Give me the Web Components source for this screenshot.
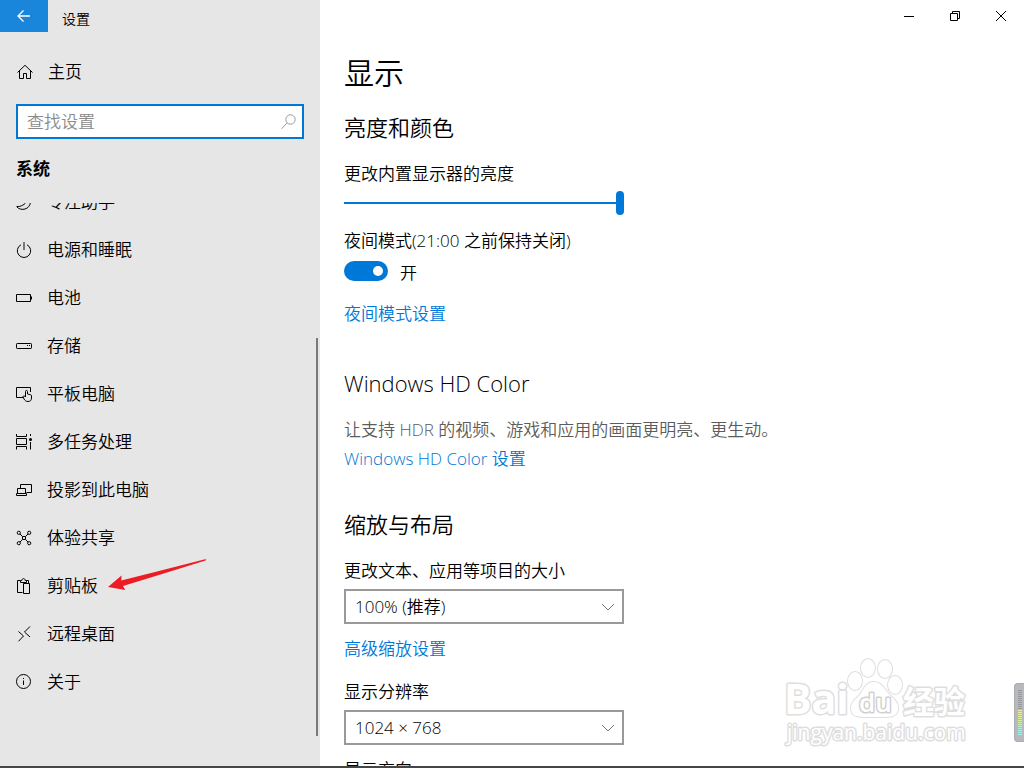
<!DOCTYPE html>
<html lang="zh-CN">
<head>
<meta charset="utf-8">
<title>设置</title>
<style>
    html, body{
        height: 100%;
        margin: 0;
    }
    body{
        overflow: hidden;
        background: #fff;
        color: #000;
        font: 350 17px/24px "Open Sans", "Noto Sans CJK SC", sans-serif;
    }
</style>
</head>
<body>

<settings-window>
    <settings-sidebar slot="sidebar">
        <nav-item icon="focus">专注助手</nav-item>
        <nav-item icon="power">电源和睡眠</nav-item>
        <nav-item icon="battery">电池</nav-item>
        <nav-item icon="storage">存储</nav-item>
        <nav-item icon="tablet">平板电脑</nav-item>
        <nav-item icon="multitask">多任务处理</nav-item>
        <nav-item icon="project">投影到此电脑</nav-item>
        <nav-item icon="share">体验共享</nav-item>
        <nav-item icon="clipboard">剪贴板<red-arrow slot="mark"></red-arrow></nav-item>
        <nav-item icon="remote">远程桌面</nav-item>
        <nav-item icon="info">关于</nav-item>
    </settings-sidebar>

    <settings-section heading="亮度和颜色">
        <brightness-slider label="更改内置显示器的亮度"></brightness-slider>
        <toggle-switch label="夜间模式(21:00 之前保持关闭)" state="开"></toggle-switch>
        <settings-link>夜间模式设置</settings-link>
    </settings-section>

    <settings-section heading="Windows HD Color">
        <settings-note>让支持 HDR 的视频、游戏和应用的画面更明亮、更生动。</settings-note>
        <settings-link near>Windows HD Color 设置</settings-link>
    </settings-section>

    <settings-section heading="缩放与布局">
        <drop-down label="更改文本、应用等项目的大小" value="100% (推荐)"></drop-down>
        <settings-link snug>高级缩放设置</settings-link>
        <drop-down label="显示分辨率" value="1024 × 768"></drop-down>
        <drop-down snug label="显示方向" value="横向"></drop-down>
    </settings-section>
</settings-window>

<script>
const icons = {
    back: `<path d="M14 8H2M7.500 2.500 2 8l5.500 5.500" stroke-width="1.300"/>`,
    home: `<path d="M1.500 9.500 9 2.300l7.500 7.200M3.500 8v7.500h4v-5h3v5h4V8" />`,
    search: `<circle cx="10.500" cy="5.500" r="4.700"/><path d="M7 9 1.500 14.800"/>`,
    focus: `<path d="M.500 12.500C5 13 9 10.500 11.500 6.500M1 13c4 4.500 13 2.500 13.500-5"/>`,
    power: `<path d="M5 2.800a6.700 6.700 0 1 0 6 0"/><path d="M8 0v8" stroke="#777" stroke-width="2"/>`,
    battery: `<path d="M.500 4.500h14v7H.500z"/><path d="M15.500 6.500v3"/>`,
    storage: `<rect x=".5" y="5.500" width="15" height="5" rx=".7"/><path d="M11 7.500h1M13 7.500h1"/>`,
    tablet: `<path d="M7 11.500H.500v-10h14V6"/><path d="M9.500 11V5.500c0-1.500 2-1.500 2 0V8l3 .700c.800.200 1 .600 1 1.300v2c0 2-1 3.500-3.500 3.500-2 0-3-.800-4-2.500L7 10.500c.500-1 1.500-.800 2.500.500"/>`,
    multitask: `<path d="M.500 0v2.500h10V0M.500 4.500h10v6H.500zM.500 15.500v-3h10v3M14.500 0v2M14.500 8v7.500"/><circle cx="14.500" cy="5.500" r="1.500" fill="currentColor" stroke="none"/>`,
    project: `<path d="M4.500 6V2.500h11v8h-5M1.500 11V6.500h8V11M.500 11.500h10v2H.500z"/>`,
    share: `<circle cx="2.800" cy="2.800" r="1.600"/><circle cx="13.200" cy="2.800" r="1.600"/><circle cx="2.800" cy="13.200" r="1.600"/><circle cx="13.200" cy="13.200" r="1.600"/><path d="m4 4 2.500 2.500M12 4 9.500 6.500M4 12l2.500-2.500M12 12 9.500 9.500M6.500 6.500h3v3h-3z"/>`,
    clipboard: `<path d="M6.500 14.500h-5v-12h3M10.500 2.500h2V5M4.500 4.500v-2h1.300c.200-2.600 3.200-2.600 3.400 0h1.300v2zM7.500 5.500h6v10h-6z"/>`,
    remote: `<path d="M2.500 5.500 7.500 10 2.500 15.300M14 .500 8.500 6 14 11"/>`,
    info: `<circle cx="7.500" cy="7.500" r="7"/><path d="M7.500 6.500V11M7.500 4v1"/>`,
    minimize: `<path d="M3 8.500h10"/>`,
    restore: `<path d="M3.500 5.500h7v7h-7zM5.500 5V3.500h7v7H11"/>`,
    close: `<path d="m3 3 10 10M13 3 3 13"/>`,
    chevron: `<path d="m2 5 6 6 6-6"/>`
};

const svg = (name, size = 16) => `<svg width="${size}" height="${size}" viewBox="0 0 ${size} ${size}" fill="none" stroke="currentColor" aria-hidden="true">${icons[name]}</svg>`;

class SettingsWindow extends HTMLElement{

    constructor(){
        super();
        this.attachShadow({mode : "open"}).innerHTML = `
            <style>
                :host{
                    display: grid;
                    grid-template-columns: 320px minmax(0, 1fr);
                    grid-template-rows: minmax(0, 1fr);
                    box-sizing: border-box;
                    height: 100vh;
                    border-bottom: 2px solid #474546;
                    position: relative;
                }
                .content{
                    display: flex;
                    flex-direction: column;
                    min-height: 0;
                    overflow: hidden;
                }
                main{
                    padding: 21px 24px 0;
                    display: flex;
                    flex-direction: column;
                    flex: none;
                }
                h1{
                    margin: 0 0 18px;
                    font-size: 30px;
                    line-height: 40px;
                    font-weight: inherit;
                }
                .sections{
                    display: flex;
                    flex-direction: column;
                    gap: 37px;
                }
            </style>
            <slot name="sidebar"></slot>
            <div class="content">
                <window-controls></window-controls>
                <main>
                    <h1>显示</h1>
                    <div class="sections"><slot></slot></div>
                </main>
            </div>
            <page-watermark></page-watermark>
            <level-meter></level-meter>
        `;
    }

}

class WindowControls extends HTMLElement{

    constructor(){
        super();
        this.attachShadow({mode : "open"}).innerHTML = `
            <style>
                :host{
                    display: flex;
                    justify-content: flex-end;
                    flex: none;
                }
                button{
                    display: grid;
                    place-items: center;
                    width: 46px;
                    height: 32px;
                    padding: 0;
                    border: 0;
                    background: none;
                    color: #000;
                }
            </style>
            <button aria-label="最小化">${svg("minimize")}</button>
            <button aria-label="还原">${svg("restore")}</button>
            <button aria-label="关闭">${svg("close")}</button>
        `;
    }

}

class SettingsSidebar extends HTMLElement{

    constructor(){
        super();
        this.attachShadow({mode : "open"}).innerHTML = `
            <style>
                :host{
                    display: flex;
                    flex-direction: column;
                    min-height: 0;
                    background: #e6e6e6;
                }
                header{
                    display: flex;
                    gap: 14px;
                    font-size: 14px;
                    line-height: 37px;
                    height: 32px;
                }
                button{
                    display: grid;
                    place-items: center;
                    padding: 0;
                    border: 0;
                    background: none;
                }
                .back{
                    width: 48px;
                    height: 32px;
                    background: #1a86db;
                    color: #fff;
                }
                .home{
                    display: flex;
                    align-items: center;
                    gap: 14px;
                    height: 48px;
                    margin-top: 16px;
                    padding-left: 16px;
                    color: inherit;
                    text-decoration: none;
                }
                .search{
                    display: flex;
                    align-items: center;
                    box-sizing: border-box;
                    height: 35px;
                    margin: 8px 16px 0;
                    padding: 0 6px 0 9px;
                    border: 2px solid #0078d7;
                    background: #fff;
                }
                input{
                    flex: 1;
                    min-width: 0;
                    padding: 0;
                    border: 0;
                    outline: 0;
                    background: none;
                    font: inherit;
                }
                input::placeholder{
                    color: #8a8a8a;
                }
                .search button{
                    color: #999;
                }
                h2{
                    margin: 18px 16px 22px;
                    font-size: 17px;
                    line-height: 24px;
                    font-weight: 700;
                }
                nav{
                    position: relative;
                    flex: 1;
                    min-height: 0;
                    overflow: hidden;
                }
                /* list is scrolled, its first row is partly hidden */
                .list{
                    margin-top: -25px;
                }
                .thumb{
                    position: absolute;
                    top: 135px;
                    right: 2px;
                    bottom: 30px;
                    width: 2px;
                    background: #7a7a7a;
                }
            </style>
            <header>
                <button class="back" aria-label="返回">${svg("back")}</button>
                <span>设置</span>
            </header>
            <a class="home" href="#home">${svg("home", 18)}<span>主页</span></a>
            <div class="search">
                <input type="text" placeholder="查找设置" aria-label="查找设置">
                <button aria-label="搜索">${svg("search")}</button>
            </div>
            <h2>系统</h2>
            <nav>
                <div class="list"><slot></slot></div>
                <div class="thumb"></div>
            </nav>
        `;
    }

}

class NavItem extends HTMLElement{

    constructor(){
        super();
        this.attachShadow({mode : "open"});
    }

    connectedCallback(){
        const icon = this.getAttribute("icon");
        this.shadowRoot.innerHTML = `
            <style>
                :host{
                    display: block;
                    position: relative;
                }
                a{
                    display: flex;
                    align-items: center;
                    gap: 15px;
                    height: 48px;
                    padding-left: 16px;
                    color: inherit;
                    text-decoration: none;
                }
            </style>
            <a href="#${icon}">${svg(icon)}<span><slot></slot></span></a>
            <slot name="mark"></slot>
        `;
    }

}

class RedArrow extends HTMLElement{

    constructor(){
        super();
        this.attachShadow({mode : "open"}).innerHTML = `
            <style>
                :host{
                    position: absolute;
                    left: 108px;
                    top: -4px;
                }
                svg{
                    display: block;
                }
            </style>
            <svg width="100" height="34" viewBox="0 0 100 34" aria-hidden="true">
                <path fill="#ed1c24" d="M0 29 13.500 17.500 13.300 22.500Q55 12 97 1.200q2 0 .500 1.300Q56 15.500 15 28l2.300 4z"/>
            </svg>
        `;
    }

}

class SettingsSection extends HTMLElement{

    constructor(){
        super();
        this.attachShadow({mode : "open"});
    }

    connectedCallback(){
        this.shadowRoot.innerHTML = `
            <style>
                :host{
                    display: block;
                }
                h2{
                    margin: 0 0 19px;
                    font-size: 22px;
                    line-height: 32px;
                    font-weight: inherit;
                }
            </style>
            <h2>${this.getAttribute("heading")}</h2>
            <slot></slot>
        `;
    }

}

class SettingsNote extends HTMLElement{

    constructor(){
        super();
        this.attachShadow({mode : "open"}).innerHTML = `
            <style>
                :host{
                    display: block;
                    color: #5c5c5c;
                }
            </style>
            <slot></slot>
        `;
    }

}

class SettingsLink extends HTMLElement{

    constructor(){
        super();
        this.attachShadow({mode : "open"}).innerHTML = `
            <style>
                :host{
                    display: block;
                    margin: 19px 0;
                }
                :host([snug]){
                    margin-top: 13px;
                }
                :host(:last-child){
                    margin-bottom: 4px;
                }
                :host([near]){
                    margin: 5px 0 0;
                }
                a{
                    color: #0078d7;
                    text-decoration: none;
                }
            </style>
            <a href="#more"><slot></slot></a>
        `;
    }

}

class BrightnessSlider extends HTMLElement{

    constructor(){
        super();
        this.attachShadow({mode : "open"});
    }

    connectedCallback(){
        this.shadowRoot.innerHTML = `
            <style>
                :host{
                    display: block;
                    margin-bottom: 14px;
                }
                label{
                    display: block;
                    margin-bottom: 5px;
                }
                input{
                    display: block;
                    appearance: none;
                    width: 100%;
                    max-width: 280px;
                    height: 24px;
                    margin: 0;
                    background: linear-gradient(#0078d7, #0078d7) center / 100% 2px no-repeat;
                }
                input::-webkit-slider-thumb{
                    appearance: none;
                    width: 8px;
                    height: 24px;
                    border-radius: 4px;
                    background: #0078d7;
                }
            </style>
            <label for="range">${this.getAttribute("label")}</label>
            <input id="range" type="range" min="0" max="100" value="100">
        `;
    }

}

class ToggleSwitch extends HTMLElement{

    constructor(){
        super();
        this.attachShadow({mode : "open"});
    }

    connectedCallback(){
        this.shadowRoot.innerHTML = `
            <style>
                :host{
                    display: block;
                }
                label{
                    display: block;
                    margin-bottom: 6px;
                }
                .row{
                    display: flex;
                    align-items: center;
                    gap: 12px;
                    height: 24px;
                }
                input{
                    appearance: none;
                    display: flex;
                    align-items: center;
                    box-sizing: border-box;
                    width: 44px;
                    height: 20px;
                    margin: 0;
                    padding: 0 5px;
                    border-radius: 10px;
                    background: #999;
                }
                input::before{
                    content: "";
                    width: 10px;
                    height: 10px;
                    border-radius: 50%;
                    background: #fff;
                }
                input:checked{
                    justify-content: flex-end;
                    background: #0078d7;
                }
                span{
                    line-height: 28px;
                    padding-top: 4px;
                }
            </style>
            <label for="toggle">${this.getAttribute("label")}</label>
            <div class="row">
                <input id="toggle" type="checkbox" checked>
                <span>${this.getAttribute("state")}</span>
            </div>
        `;
    }

}

class DropDown extends HTMLElement{

    constructor(){
        super();
        this.attachShadow({mode : "open"});
    }

    connectedCallback(){
        this.shadowRoot.innerHTML = `
            <style>
                :host{
                    display: block;
                }
                :host([snug]){
                    margin-top: 13px;
                }
                label{
                    display: block;
                    margin-bottom: 6px;
                }
                .box{
                    display: grid;
                    align-items: center;
                    max-width: 280px;
                }
                select, svg{
                    grid-area: 1 / 1;
                }
                select{
                    appearance: none;
                    box-sizing: border-box;
                    width: 100%;
                    height: 35px;
                    padding: 0 32px 0 9px;
                    border: 2px solid #999;
                    border-radius: 0;
                    background: #fff;
                    color: inherit;
                    font: inherit;
                }
                svg{
                    justify-self: end;
                    margin-right: 8px;
                    color: #777;
                    pointer-events: none;
                }
            </style>
            <label for="choice">${this.getAttribute("label")}</label>
            <div class="box">
                <select id="choice"><option>${this.getAttribute("value")}</option></select>
                ${svg("chevron")}
            </div>
        `;
    }

}

class PageWatermark extends HTMLElement{

    constructor(){
        super();
        this.attachShadow({mode : "open"}).innerHTML = `
            <style>
                :host{
                    position: absolute;
                    right: 50px;
                    bottom: 18px;
                    pointer-events: none;
                }
                svg{
                    display: block;
                    fill: #fff;
                    stroke: #dedede;
                    stroke-width: 3px;
                    stroke-linejoin: round;
                    paint-order: stroke;
                }
                text{
                    font-family: "Open Sans", "Noto Sans CJK SC", sans-serif;
                }
                ellipse, path{
                    stroke-width: 2px;
                }
                .paw-text{
                    stroke: #d0d0d0;
                }
            </style>
            <svg width="190" height="92" viewBox="0 0 190 92">
                <text x="0" y="58" font-size="41" font-weight="700">Bai</text>
                <ellipse cx="71" cy="25" rx="7" ry="9"/>
                <ellipse cx="84" cy="12" rx="7" ry="9"/>
                <ellipse cx="101" cy="13" rx="7" ry="9"/>
                <ellipse cx="111" cy="29" rx="7" ry="9"/>
                <path d="M90 26c7 0 10 6 14 11 5 6 11 9 10 16-1 9-8 8-23 8s-24 1-24-9c0-7 6-9 10-15 3-5 6-11 13-11z"/>
                <text class="paw-text" x="75" y="56" font-size="26" font-weight="600">du</text>
                <text x="119" y="57" font-size="31" font-weight="700">经验</text>
                <text x="3" y="84" font-size="21" font-weight="400">jingyan.baidu.com</text>
            </svg>
        `;
    }

}

class LevelMeter extends HTMLElement{

    constructor(){
        super();
        this.attachShadow({mode : "open"}).innerHTML = `
            <style>
                :host{
                    position: absolute;
                    right: 0;
                    bottom: 24px;
                    box-sizing: border-box;
                    width: 10px;
                    height: 59px;
                    padding: 6px 2px 6px 3px;
                    border: 1px solid #aaabaf;
                    border-right: 0;
                    border-radius: 4px 0 0 4px;
                    background: #b8b9bf;
                }
                div{
                    height: 100%;
                    background:
                        repeating-linear-gradient(transparent 0 1px, #b8b9bf 1px 2px),
                        linear-gradient(#96979c 42%, #f5f19b 42%, #d5f0a0 70%, #a5efe8 90%);
                }
            </style>
            <div></div>
        `;
    }

}

customElements.define("settings-window", SettingsWindow);
customElements.define("window-controls", WindowControls);
customElements.define("settings-sidebar", SettingsSidebar);
customElements.define("nav-item", NavItem);
customElements.define("red-arrow", RedArrow);
customElements.define("settings-section", SettingsSection);
customElements.define("settings-note", SettingsNote);
customElements.define("settings-link", SettingsLink);
customElements.define("brightness-slider", BrightnessSlider);
customElements.define("toggle-switch", ToggleSwitch);
customElements.define("drop-down", DropDown);
customElements.define("page-watermark", PageWatermark);
customElements.define("level-meter", LevelMeter);
</script>
</body>
</html>
